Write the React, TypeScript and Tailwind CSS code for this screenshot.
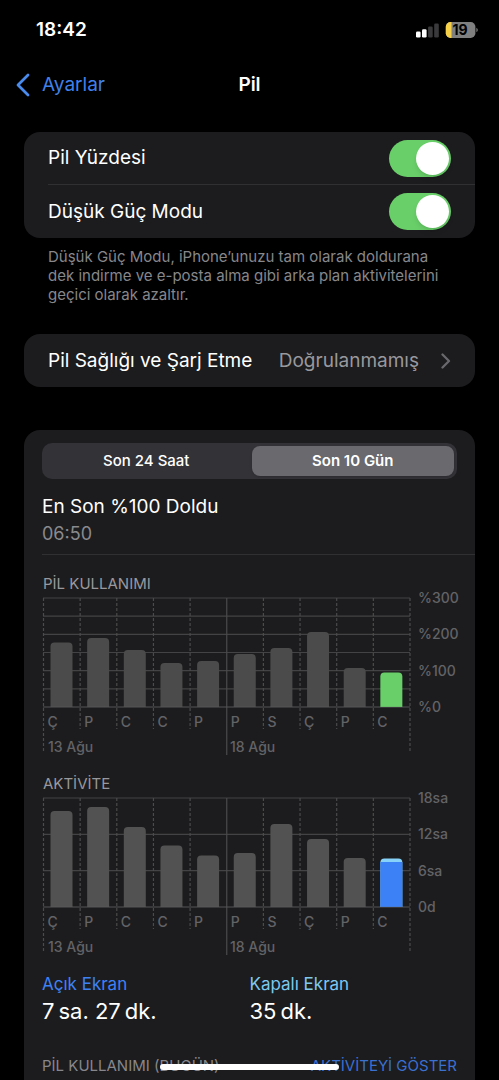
import { useId, useState } from "react";

type Bar = { day: string; height: number; fill?: string; cap?: { height: number; fill: string } };

const STEP = 36.65;
const BASE = 113;
const TOP = 4;

const usage: Bar[] = [
  { day: "Ç", height: 64.5 },
  { day: "P", height: 69 },
  { day: "C", height: 57 },
  { day: "C", height: 44 },
  { day: "P", height: 46 },
  { day: "P", height: 53 },
  { day: "S", height: 59 },
  { day: "Ç", height: 75 },
  { day: "P", height: 39 },
  { day: "C", height: 34.5, fill: "#69d069" },
];

const activity: Bar[] = [
  { day: "Ç", height: 96 },
  { day: "P", height: 100 },
  { day: "C", height: 80 },
  { day: "C", height: 61.5 },
  { day: "P", height: 51.5 },
  { day: "P", height: 54 },
  { day: "S", height: 83 },
  { day: "Ç", height: 68 },
  { day: "P", height: 49 },
  { day: "C", height: 48.5, fill: "#3c82f6", cap: { height: 3.5, fill: "#86d2f8" } },
];

function Toggle({ label }: { label: string }) {
  const id = useId();
  const [on, setOn] = useState(true);
  return (
    <div className="flex h-[53px] items-center justify-between pr-6">
      <label htmlFor={id} className="text-[19px] leading-7 text-white">
        {label}
      </label>
      <span className="relative h-[37px] w-[62px]">
        <input
          id={id}
          type="checkbox"
          role="switch"
          checked={on}
          onChange={(e) => setOn(e.target.checked)}
          className="peer h-full w-full cursor-pointer appearance-none rounded-full bg-[#39393d] checked:bg-[#69d069]"
        />
        <span className="pointer-events-none absolute left-0.5 top-0.5 size-[33px] rounded-full bg-white shadow-md peer-checked:left-[27px]" />
      </span>
    </div>
  );
}

function barPath(x: number, h: number) {
  const y = BASE - h;
  return `M${x} ${BASE}V${y + 4}q0-4 4-4h14q4 0 4 4V${BASE}z`;
}

function Chart({
  title,
  bars,
  rows,
  labels,
  color,
}: {
  title: string;
  bars: Bar[];
  rows: number;
  labels: string[];
  color: string;
}) {
  const span = BASE - TOP;
  return (
    <section className="pl-[19px]">
      <h2 className="text-[15px] leading-5 text-[#98989d]">{title}</h2>
      <svg
        viewBox="0 0 432 170"
        className="block h-auto w-full overflow-visible"
        role="img"
        aria-label={title}
      >
        {Array.from({ length: rows + 1 }, (_, i) => {
          const y = TOP + (span * i) / rows;
          return <path key={i} d={`M0 ${y}H367`} stroke="#434345" strokeWidth="1.2" />;
        })}
        {Array.from({ length: 11 }, (_, i) => {
          const x = i * STEP + 0.5;
          const end = i === 0 || i === 10 ? 159 : i === 5 ? 161 : 135;
          return (
            <path
              key={i}
              d={`M${x} ${TOP}V${end}`}
              stroke="#4b4b4d"
              strokeWidth="1.2"
              strokeDasharray={i === 5 ? undefined : "3 2"}
            />
          );
        })}
        {bars.map((b, i) => {
          const x = i * STEP + 7.5;
          return (
            <g key={i}>
              <path d={barPath(x, b.height)} fill={b.cap ? b.cap.fill : (b.fill ?? color)} />
              {b.cap && (
                <path
                  d={`M${x} ${BASE}V${BASE - b.height + b.cap.height}h22V${BASE}z`}
                  fill={b.fill}
                />
              )}
              <text x={i * STEP + 4.5} y="133" fontSize="14" fontWeight="500" fill="#636366">
                {b.day}
              </text>
            </g>
          );
        })}
        <path d={`M0 ${BASE}H367`} stroke="#6b6b6d" strokeOpacity=".35" strokeWidth="1" />
        <g fontSize="14" fontWeight="500" fill="#636366">
          <text x="5" y="158">
            13 Ağu
          </text>
          <text x="187" y="158">
            18 Ağu
          </text>
          {labels.map((l, i) => (
            <text key={l} x="375" y={TOP + 5 + (span * i) / (labels.length - 1)}>
              {l}
            </text>
          ))}
        </g>
      </svg>
    </section>
  );
}

export default function App() {
  const [tab, setTab] = useState(1);
  return (
    <div className="flex min-h-screen flex-col bg-black font-['Inter',sans-serif] text-white">
      <header>
        <div className="flex h-[60px] items-center justify-between pl-9 pr-[21px]">
          <time className="text-[19px] leading-7 font-semibold">18:42</time>
          <div className="flex items-center gap-1.5">
            <svg width="23" height="15" viewBox="0 0 23 15" aria-hidden="true">
              <rect x="0" y="8.5" width="4.6" height="6" rx="1.3" fill="#fff" />
              <rect x="6" y="6.3" width="4.6" height="8.2" rx="1.3" fill="#fff" />
              <rect x="12.1" y="3.4" width="4.6" height="11.1" rx="1.3" fill="#3a3a3c" />
              <rect x="18.2" y="0.5" width="4.6" height="14" rx="1.3" fill="#3a3a3c" />
            </svg>
            <svg width="33" height="18" viewBox="0 0 33 18" role="img" aria-label="19">
              <clipPath id="cell">
                <rect x="0.8" y="1" width="29.6" height="16" rx="4.8" />
              </clipPath>
              <g clipPath="url(#cell)">
                <rect width="32" height="18" fill="#7f7f80" />
                <rect width="6.5" height="18" fill="#f6d148" />
              </g>
              <path d="M31.4 6.7q1.4.8 1.4 2.3t-1.4 2.3z" fill="#7f7f80" />
              <text x="15" y="14" textAnchor="middle" fontSize="14" fontWeight="700" fill="#000">
                19
              </text>
            </svg>
          </div>
        </div>
        <nav className="grid h-[50px] grid-cols-3 items-center px-4">
          <a href="#ayarlar" className="flex items-center gap-3 text-[19px] leading-6 text-[#4080ea]">
            <svg width="14" height="24" viewBox="0 0 14 24" fill="none" aria-hidden="true">
              <path
                d="M12 2 2 12l10 10"
                stroke="#4a8bee"
                strokeWidth="2.8"
                strokeLinecap="round"
                strokeLinejoin="round"
              />
            </svg>
            Ayarlar
          </a>
          <h1 className="text-center text-[19px] leading-7 font-semibold">Pil</h1>
        </nav>
      </header>

      <main className="flex grow flex-col px-6 pt-[22px]">
        <div className="divide-y divide-[#303032] rounded-2xl bg-[#1c1c1e] pl-6">
          <Toggle label="Pil Yüzdesi" />
          <Toggle label="Düşük Güç Modu" />
        </div>
        <p className="px-6 pt-[9px] text-[15px] leading-[19px] text-[#87878b]">
          Düşük Güç Modu, iPhone’unuzu tam olarak doldurana dek indirme ve e-posta alma gibi arka
          plan aktivitelerini geçici olarak azaltır.
        </p>

        <a
          href="#saglik"
          className="mt-[30px] flex h-[53px] items-center rounded-2xl bg-[#1c1c1e] px-6 text-[19px] leading-7"
        >
          <span className="grow whitespace-nowrap">Pil Sağlığı ve Şarj Etme</span>
          <span className="text-[#98989d]">Doğrulanmamış</span>
          <svg width="10" height="16" viewBox="0 0 10 16" fill="none" className="ml-[22px]" aria-hidden="true">
            <path
              d="m1.5 1.5 6.5 6.5-6.5 6.5"
              stroke="#69696d"
              strokeWidth="2.3"
              strokeLinecap="round"
              strokeLinejoin="round"
            />
          </svg>
        </a>

        <div className="mt-[43px] grow rounded-t-2xl bg-[#1c1c1e] pt-[13px]">
          <div className="mx-[18px] grid h-9 grid-cols-2 gap-1 rounded-[10px] bg-[#323237] p-[3px]">
            {["Son 24 Saat", "Son 10 Gün"].map((t, i) => (
              <button
                key={t}
                type="button"
                aria-pressed={tab === i}
                onClick={() => setTab(i)}
                className={
                  tab === i
                    ? "rounded-lg bg-[#69696e] text-[15px] font-semibold shadow-sm"
                    : "rounded-lg text-[15px] font-medium"
                }
              >
                {t}
              </button>
            ))}
          </div>
          <div className="ml-[18px] border-b border-[#303032] pb-1.5 pt-[15px]">
            <p className="text-[19px] leading-[26px]">En Son %100 Doldu</p>
            <p className="text-lg leading-7 text-[#8a8a8e]">06:50</p>
          </div>
          <div className="flex flex-col gap-[10px] pt-[19px]">
            <Chart
              title="PİL KULLANIMI"
              bars={usage}
              rows={6}
              labels={["%300", "%200", "%100", "%0"]}
              color="#4b4b4b"
            />
            <Chart
              title="AKTİVİTE"
              bars={activity}
              rows={3}
              labels={["18sa", "12sa", "6sa", "0d"]}
              color="#525252"
            />
          </div>
          <dl className="grid grid-cols-2 px-[18px] pt-2">
            <div>
              <dt className="text-[17px] leading-6 text-[#3c82f6]">Açık Ekran</dt>
              <dd className="text-[22px] leading-[30px]">{"7\u2009sa. 27\u2009dk."}</dd>
            </div>
            <div>
              <dt className="text-[17px] leading-6 text-[#7cc8ee]">Kapalı Ekran</dt>
              <dd className="text-[22px] leading-[30px]">{"35\u2009dk."}</dd>
            </div>
          </dl>
          <div className="flex justify-between px-[18px] pt-[30px] text-[15px] leading-5">
            <h2 className="text-[#87878b]">PİL KULLANIMI (BUGÜN)</h2>
            <button type="button" className="text-[#3a70d0]">
              AKTİVİTEYİ GÖSTER
            </button>
          </div>
        </div>
      </main>
      <div className="pointer-events-none fixed inset-x-0 bottom-2.5 mx-auto h-1.5 w-[36%] rounded-full bg-white" />
    </div>
  );
}
